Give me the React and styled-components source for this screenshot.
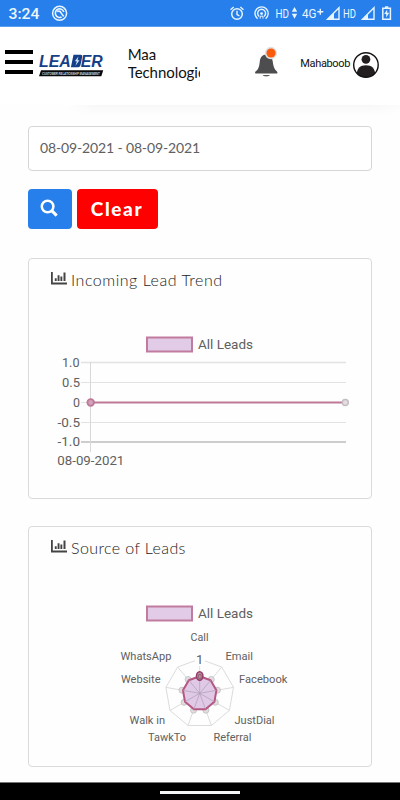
import React from "react";
import styled, { createGlobalStyle } from "styled-components";

const Global = createGlobalStyle`
  *{box-sizing:border-box}
  body{margin:0;background:#fefefe;overflow:hidden}
`;
const Screen = styled.div`
  width:400px;height:800px;display:flex;flex-direction:column;
  background:#fefefe;color:#111;font-family:Lato,sans-serif;overflow:hidden;
`;
const StatusBar = styled.header`
  height:27px;flex:none;background:#267fea;color:#e6f4ff;display:flex;
  border-bottom:1px solid #5b9eed;
`;
const StatusArt = styled.svg`
  display:block;width:400px;height:26px;
`;
const AppBar = styled.div`
  height:78px;flex:none;background:#fff;display:flex;align-items:flex-start;padding:0 20px 0 5px;
`;
const MenuButton = styled.div`
  width:28px;height:24px;margin-top:23px;display:flex;flex-direction:column;justify-content:space-between;
`;
const MenuLine = styled.span`
  height:4px;background:#000;
`;
const Logo = styled.svg`
  width:66px;height:26px;margin:25px 0 0 6px;display:block;
`;
const Company = styled.div`
  width:73px;margin:19px 0 0 23px;font-size:15px;line-height:17.5px;overflow:hidden;white-space:nowrap;letter-spacing:-0.05px;
`;
const Bell = styled.svg`
  width:26px;height:34px;margin:18px 0 0 54px;display:block;
`;
const User = styled.div`
  margin:30px 0 0 20px;width:52px;font:11px/14px Roboto,sans-serif;letter-spacing:-0.35px;white-space:nowrap;
`;
const Avatar = styled.svg`
  width:28px;height:28px;margin:24px 0 0 0;display:block;
`;
const Shade = styled.div`
  height:10px;flex:none;margin-left:68px;
  background:linear-gradient(180deg,#fefefe00,#fefefe),linear-gradient(90deg,#fefefe,#f7f7f7 30px,#f7f7f7 300px,#fcfcfc);
`;
const Content = styled.main`
  flex:1;min-height:0;padding:11px 28px 0;display:flex;flex-direction:column;
`;
const DateField = styled.div`
  height:45px;flex:none;border:1px solid #d6d6d6;border-radius:4px;background:#fff;
  padding:0 11px;line-height:42px;font-size:14px;color:#606060;letter-spacing:-0.14px;
`;
const Actions = styled.div`
  display:flex;gap:4.5px;margin-top:18px;height:40px;flex:none;
`;
const Button = styled.div`
  width:${p => p.$w}px;height:40px;border-radius:4px;background:${p => p.$bg};color:#fff;
  display:flex;align-items:center;justify-content:center;
  font-size:19px;font-weight:900;letter-spacing:1.6px;line-height:38px;
`;
const SearchIcon = styled.svg`
  width:18px;height:18px;margin:0 2px 3px 0;
`;
const Card = styled.section`
  height:241px;flex:none;margin-top:${p => p.$gap}px;border:1px solid #dadada;border-radius:4px;background:#fefefe;
  display:flex;flex-direction:column;
`;
const CardTitle = styled.div`
  height:44px;flex:none;padding:0 22px 4px;display:flex;align-items:center;gap:4px;
  font-size:16px;font-weight:300;color:#222;letter-spacing:${p => p.$ls}px;white-space:nowrap;
`;
const ChartIcon = styled.svg`
  width:16px;height:13px;margin-bottom:1px;
`;
const Plot = styled.svg`
  width:342px;height:195px;display:block;font-family:Roboto,sans-serif;
`;
const NavBar = styled.footer`
  height:18px;flex:none;background:#000;border-top:1px solid #777;display:flex;justify-content:center;padding-top:8px;
`;
const NavHandle = styled.span`
  width:80px;height:3px;background:#f1f3f4;
`;

const Label = ({ x, y, w, size = 11, children }) => (
  <text x={x} y={y} fontSize={size} textLength={w} lengthAdjust="spacingAndGlyphs" fill="#606060">{children}</text>
);

const Bars = () => (
  <ChartIcon viewBox="0 0 16 13" fill="#444">
    <path d="M0 0h1.8v10.6H16v1.9H0z" />
    <path d="M3.8 6.2h1.9V9H3.8zM6.6 3.2h1.9V9H6.6zM9.4 4.4h1.9V9H9.4zM12.5 .6h2v8.4h-2z" />
  </ChartIcon>
);

const Legend = ({ y }) => (
  <>
    <rect x="118" y={y} width="45" height="14" fill="#e2cbe6" stroke="#c07b9e" strokeWidth="2" />
    <Label x="169" y={y + 11.7} w="55" size="13">All Leads</Label>
  </>
);

const RADAR = { x: 170.7, y: 122.3 };
const ring = r => Array.from({ length: 9 }, (_, i) => {
  const a = (i * 40 * Math.PI) / 180;
  return [RADAR.x + r * Math.sin(a), RADAR.y - r * Math.cos(a)];
});
const points = list => list.map(p => p.map(n => n.toFixed(1)).join(",")).join(" ");

/* label, line y, text x, text width */
const ticks = [["1.0", 59.5, 33, 17.5], ["0.5", 79.5, 33, 18], ["0", 99.5, 44, 7], ["-0.5", 119.5, 28.5, 22.5], ["-1.0", 139, 28.5, 22.5]];
/* label, x, baseline, width */
const sources = [
  ["Call", 161.5, 70.2, 18], ["Email", 196.5, 88.5, 27.5], ["Facebook", 210, 112, 48.5],
  ["JustDial", 205.5, 152.5, 40], ["Referral", 184.5, 169.7, 38], ["TawkTo", 119, 169.7, 38],
  ["Walk in", 100.5, 152.5, 35.5], ["Website", 92, 112, 39.5], ["WhatsApp", 91.5, 88.5, 51],
];

export default function App() {
  return (
    <Screen>
      <Global />
      <StatusBar>
        <StatusArt viewBox="0 0 400 26" fill="none" stroke="#e6f4ff" fontFamily="Roboto,sans-serif">
          <g fill="#eaf6ff" stroke="none">
            <text x="8.5" y="19.2" fontSize="15.5" fontWeight="500" textLength="31" lengthAdjust="spacingAndGlyphs">3:24</text>
            <text x="275.5" y="17.6" fontSize="12.5" textLength="13.5" lengthAdjust="spacingAndGlyphs">HD</text>
            <text x="302" y="18" fontSize="13.5" textLength="14.5" lengthAdjust="spacingAndGlyphs">4G</text>
            <text x="343" y="17.6" fontSize="12.5" textLength="13" lengthAdjust="spacingAndGlyphs">HD</text>
            <path d="M294.5 7l2.7 4.7h-5.4zM294.5 18.7l2.7-5h-5.4z" />
          </g>
          <path d="M317.3 11.7h6M320.3 8.7v6" strokeWidth="1.4" />
          <circle cx="59.6" cy="13.3" r="7" strokeWidth="1.5" />
          <path d="M61.6 17a4.3 4.3 0 1 1 2.2-5M57.2 11.4c2-.6 3.4.1 4.1 1.7l2.4 3.4" strokeWidth="1.6" />
          <circle cx="237" cy="14" r="5.3" strokeWidth="1.5" />
          <path d="M237 10.8v3.7l2.4 1.3M230.5 9.8l3.2-2.9M243.5 9.8l-3.2-2.9" strokeWidth="1.4" />
          <path d="M257.6 18.7a6.6 6.6 0 1 1 8 0M259.2 16.5a4 4 0 1 1 4.8 0" strokeWidth="1.4" />
          <circle cx="261.6" cy="13.6" r="1.4" fill="#e6f4ff" stroke="none" /><path d="M260.2 18.7v-2.5h2.8v2.5" strokeWidth="1" />
          <path d="M339 7.7v11.5h-11.5z" strokeWidth="1.4" />
          <path d="M327 19.5l7-7v7z" fill="#e6f4ff" stroke="none" />
          <path d="M374 7.7v11.5h-11.5z" strokeWidth="1.4" />
          <path d="M362 19.5l6-6v6z" fill="#e6f4ff" stroke="none" />
          <path d="M382.8 8.2h7.6v11h-7.6zM385 7h3.3" strokeWidth="1.5" />
          <path d="M387.2 9.5l-3 4.6h2v3.4l3-4.8h-2z" fill="#e6f4ff" stroke="none" />
        </StatusArt>
      </StatusBar>
      <AppBar>
        <MenuButton><MenuLine /><MenuLine /><MenuLine /></MenuButton>
        <Logo viewBox="0 0 66 26">
          <g fontSize="17" fontWeight="700" fontStyle="italic" fill="#153f87" fontFamily="Liberation Sans,sans-serif">
            <text x="0" y="15.3" textLength="32" lengthAdjust="spacingAndGlyphs">LEA</text>
            <text x="42" y="15.3" textLength="22" lengthAdjust="spacingAndGlyphs">ER</text>
          </g>
          <path d="M34.6 2.8h7.2q2 0 1.6 2l-1.8 8.4q-.4 2-2.4 2h-7.2z" fill="#153f87" />
          <path d="M39.6 4.5l-3.6 4.8h2L36.6 13.7l4-5.5h-2z" fill="#d5e8ff" />
          <path d="M2 18.3h62.5l-2 5.9H0z" fill="#080808" />
          <text x="3" y="22.8" fontSize="4.2" fontWeight="700" fontStyle="italic" fill="#ddd" fontFamily="Liberation Sans,sans-serif" textLength="58" lengthAdjust="spacingAndGlyphs">CUSTOMER RELATIONSHIP MANAGEMENT</text>
        </Logo>
        <Company>Maa<br />Technologies</Company>
        <Bell viewBox="0 0 26 34">
          <path d="M12.3 9.4c-4 0-6.1 3-6.5 7-.4 4.3-1.2 8.1-4 9.8-1.2.9-1 2.4.6 2.4h19.8c1.6 0 1.8-1.5.6-2.4-2.5-1.8-3.5-5.5-4-9.8-.5-4-2.5-7-6.5-7z" fill="#4d4d4f" />
          <path d="M8.7 30.2h7.2c-.7 1.5-6.5 1.5-7.2 0z" fill="#222" />
          <circle cx="17" cy="8" r="6.2" fill="#dfe0e2" /><circle cx="17.1" cy="8" r="4.6" fill="#f95a0c" />
        </Bell>
        <User>Mahaboob</User>
        <Avatar viewBox="0 0 28 28">
          <defs><clipPath id="face"><circle cx="14" cy="14" r="12.3" /></clipPath></defs>
          <circle cx="14" cy="14" r="12.3" fill="#fff" />
          <g clipPath="url(#face)" fill="#231f20"><circle cx="14" cy="8.3" r="4.4" /><path d="M4.7 24c0-6.6 3.5-9.7 9.3-9.7s9.3 3.1 9.3 9.7v5H4.7z" /></g>
          <circle cx="14" cy="14" r="12.3" fill="none" stroke="#111" strokeWidth="1.4" />
        </Avatar>
      </AppBar>
      <Shade />
      <Content>
        <DateField>08-09-2021 - 08-09-2021</DateField>
        <Actions>
          <Button $w={44} $bg="#267fea">
            <SearchIcon viewBox="0 0 18 18" fill="none" stroke="#fff" strokeWidth="2.5">
              <circle cx="7.6" cy="7.5" r="5.8" /><path d="M11.7 11.6l5 5" strokeWidth="3" />
            </SearchIcon>
          </Button>
          <Button $w={81} $bg="#fe0000">Clear</Button>
        </Actions>
        <Card $gap={29}>
          <CardTitle $ls={0.53}><Bars />Incoming Lead Trend</CardTitle>
          <Plot viewBox="0 0 342 195">
            <Legend y={34.5} />
            {ticks.map(([t, y, x, w], i) => (
              <g key={t}>
                <path d={`M52 ${y}H317`} stroke={i === 4 ? "#bdbdbd" : "#e2e2e2"} strokeWidth={i === 0 || i === 4 ? 1.4 : 1} />
                <Label x={x} y={y + 4.3} w={w} size="13">{t}</Label>
              </g>
            ))}
            <path d="M61.5 59V149" stroke="#d8d8d8" />
            <path d="M62 99.5H316" stroke="#bd7896" strokeWidth="2" />
            <circle cx="61.7" cy="99.5" r="3.3" fill="#d3a2ba" stroke="#bd7896" strokeWidth="1.8" />
            <circle cx="316.3" cy="99.5" r="3" fill="#e5dce1" stroke="#c3bcc0" strokeWidth="1.4" />
            <Label x="28.3" y="162" w="67" size="12.7">08-09-2021</Label>
          </Plot>
        </Card>
        <Card $gap={27}>
          <CardTitle $ls={0.4}><Bars />Source of Leads</CardTitle>
          <Plot viewBox="0 0 342 195">
            <Legend y={35.5} />
            <g fill="none" stroke="#dcdcdc">
              <polygon points={points(ring(34.3))} />
              {ring(34.3).map(([x, y], i) => <path key={i} d={`M${RADAR.x} ${RADAR.y}L${x} ${y}`} />)}
            </g>
            {ring(18).slice(1).map(([x, y], i) => <circle key={i} cx={x} cy={y} r="3" fill="#e1dee0" stroke="#c8c4c7" />)}
            <polygon points={points(ring(17))} fill="#e0c9e6" stroke="#b65782" strokeWidth="2" strokeLinejoin="round" />
            {ring(17).map(([x, y], i) => <path key={i} d={`M${RADAR.x} ${RADAR.y}L${x} ${y}`} stroke="#ad9eb4" strokeWidth=".7" />)}
            <rect x="166" y="81" width="10" height="14" fill="#fefefe" />
            <Label x="167" y="92.7" size="13">1</Label>
            <ellipse cx="170.7" cy="105" rx="3.2" ry="4.3" fill="#c58aa8" stroke="#963c68" strokeWidth="1.5" />
            <Label x="168.5" y="107.5" size="7" w="4.4">0</Label>
            {sources.map(([t, x, y, w]) => <Label key={t} x={x} y={y} w={w}>{t}</Label>)}
          </Plot>
        </Card>
      </Content>
      <NavBar><NavHandle /></NavBar>
    </Screen>
  );
}
